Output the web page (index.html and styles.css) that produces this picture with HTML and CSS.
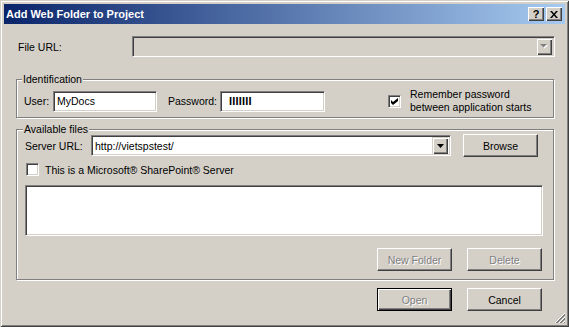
FILE: index.html
```html
<!DOCTYPE html>
<html>
<head>
<meta charset="utf-8">
<title>Add Web Folder to Project</title>
<link rel="stylesheet" href="styles.css">
</head>
<body>
<div class="window">
  <div class="titlebar">
    <span class="title">Add Web Folder to Project</span>
    <div class="tbtns">
      <span class="tbtn help">?</span>
      <span class="tbtn close"><svg width="8" height="7" viewBox="0 0 8 7"><path d="M0 0h2l2 2.4L6 0h2L5 3.5 8 7H6L4 4.6 2 7H0l3-3.5z" fill="#000"/></svg></span>
    </div>
  </div>
  <div class="content">
    <div class="file-row">
      <span class="lbl file-lbl">File URL:</span>
      <div class="combo sunken disabled">
        <span class="combo-text"></span>
        <span class="dd"><svg width="8" height="5" viewBox="0 0 8 5"><path d="M1 1h7L4.5 4.5z" fill="#fff"/><path d="M0 0h7L3.5 3.5z" fill="#808080"/></svg></span>
      </div>
    </div>

    <fieldset class="group ident">
      <legend>Identification</legend>
      <div class="ident-row">
        <span class="lbl user-lbl">User:</span>
        <div class="field sunken user">MyDocs</div>
        <span class="lbl pw-lbl">Password:</span>
        <div class="field sunken pw"><span class="mask">IIIIIII</span></div>
        <div class="remember">
          <span class="check sunken"><svg width="7" height="7" viewBox="0 0 7 7"><path d="M0 2l2 2 5-4v3L2 7 0 5z" fill="#000"/></svg></span>
          <span class="check-lbl">Remember password<br>between application starts</span>
        </div>
      </div>
    </fieldset>

    <fieldset class="group files">
      <legend>Available files</legend>
      <div class="server-row">
        <span class="lbl server-lbl">Server URL:</span>
        <div class="combo sunken server">
          <span class="combo-text">http://vietspstest/</span>
          <span class="dd"><svg width="7" height="4" viewBox="0 0 7 4"><path d="M0 0h7L3.5 4z" fill="#000"/></svg></span>
        </div>
        <span class="btn browse">Browse</span>
      </div>
      <div class="sp-row">
        <span class="check sunken"></span>
        <span class="sp-lbl">This is a Microsoft® SharePoint® Server</span>
      </div>
      <div class="listbox sunken"></div>
      <div class="btn-row">
        <span class="btn disabled">New Folder</span>
        <span class="btn disabled">Delete</span>
      </div>
    </fieldset>

    <div class="footer">
      <span class="btn default disabled">Open</span>
      <span class="btn">Cancel</span>
    </div>
  </div>
  <svg class="grip" width="12" height="12" viewBox="0 0 12 12">
    <path d="M11 1L1 11M11 5L5 11M11 9L9 11" stroke="#fff" stroke-width="1" fill="none"/>
    <path d="M11 2L2 11M11 3L3 11M11 6L6 11M11 7L7 11M11 10L10 11" stroke="#808080" stroke-width="1" fill="none"/>
  </svg>
</div>
</body>
</html>
```

FILE: styles.css
```css
* {
  box-sizing: border-box;
  margin: 0;
  padding: 0;
}

body {
  margin: 0;
  background: #d4d0c8;
  font-family: "Liberation Sans", Arial, sans-serif;
  font-size: 10.5px;
  color: #000;
}

.window {
  position: relative;
  width: 569px;
  height: 327px;
  background: #d4d0c8;
  padding: 4px;
  display: flex;
  flex-direction: column;
  box-shadow: inset 1px 1px 0 #d4d0c8, inset -1px -1px 0 #404040, inset 2px 2px 0 #fff, inset -2px -2px 0 #808080;
}

.titlebar {
  height: 20px;
  flex: none;
  display: flex;
  align-items: center;
  padding: 0 3px 0 2px;
  background: linear-gradient(to right, #0a246a, #a6caf0);
  color: #fff;
  font-weight: bold;
  font-size: 11px;
}

.title {
  flex: 1;
}

.tbtns {
  display: flex;
  gap: 2px;
}

.tbtn {
  width: 16px;
  height: 14px;
  display: flex;
  align-items: center;
  justify-content: center;
  background: #d4d0c8;
  color: #000;
  font-size: 11px;
  font-weight: bold;
  box-shadow: inset 1px 1px 0 #fff, inset -1px -1px 0 #404040, inset -2px -2px 0 #808080;
}

.content {
  flex: 1;
  display: flex;
  flex-direction: column;
  padding: 12px 11px 0 12px;
}

.sunken {
  border: 1px solid;
  border-color: #808080 #fff #fff #808080;
  box-shadow: inset 1px 1px 0 #404040, inset -1px -1px 0 #d4d0c8;
  background: #fff;
}

.lbl {
  white-space: nowrap;
}

/* File URL row */
.file-row {
  display: flex;
  align-items: center;
  height: 21px;
  margin-right: -1px;
}

.file-lbl {
  width: 116px;
  padding-left: 2px;
}

.combo {
  display: flex;
  align-items: center;
  height: 21px;
  padding: 2px;
}

.file-row .combo {
  flex: 1;
}

.combo.disabled {
  background: #d4d0c8;
}

.combo-text {
  flex: 1;
  padding-left: 2px;
}

.dd {
  width: 16px;
  height: 17px;
  display: flex;
  align-items: center;
  justify-content: center;
  background: #d4d0c8;
  box-shadow: inset 1px 1px 0 #d4d0c8, inset 2px 2px 0 #fff, inset -1px -1px 0 #404040, inset -2px -2px 0 #808080;
}

/* Group boxes */
.group {
  border: 1px solid #808080;
  box-shadow: inset 1px 1px 0 #fff, 1px 1px 0 #fff;
}

.group legend {
  line-height: 13px;
  padding: 0 1px;
  margin-left: -2px;
  background: #d4d0c8;
}

.ident {
  margin-top: 16px;
  padding: 2px 8px 3px 7px;
}

.ident-row {
  display: flex;
  align-items: center;
}

.user-lbl {
  width: 29px;
}

.field {
  height: 21px;
  display: flex;
  align-items: center;
  padding-left: 3px;
}

.user {
  width: 104px;
}

.pw-lbl {
  width: 52px;
  margin-left: 11px;
}

.pw {
  width: 105px;
  padding-left: 8px;
}

.mask {
  font-weight: bold;
  font-size: 11px;
  letter-spacing: 0.2px;
}

.remember {
  display: flex;
  align-items: center;
  margin-left: 63px;
}

.check {
  width: 13px;
  height: 13px;
  flex: none;
  display: flex;
  align-items: center;
  justify-content: center;
}

.check-lbl {
  margin-left: 9px;
  line-height: 13px;
}

/* Available files */
.files {
  margin-top: 5px;
  padding: 0 10px 8px 8px;
}

.server-row {
  display: flex;
  align-items: center;
  margin-top: -2px;
  height: 23px;
}

.server-lbl {
  width: 66px;
}

.server {
  width: 360px;
}

.server .combo-text {
  padding-left: 1px;
}

.btn {
  width: 75px;
  height: 23px;
  flex: none;
  display: flex;
  align-items: center;
  justify-content: center;
  background: #d4d0c8;
  border: 1px solid;
  border-color: #fff #404040 #404040 #fff;
  box-shadow: inset -1px -1px 0 #808080, inset 1px 1px 0 #d4d0c8;
}

.btn.default {
  border: 1px solid #000;
  box-shadow: inset 1px 1px 0 #fff, inset -1px -1px 0 #404040, inset -2px -2px 0 #808080;
}

.btn.disabled {
  color: #808080;
  text-shadow: 1px 1px 0 #fff;
}

.browse {
  margin-left: 12px;
}

.sp-row {
  display: flex;
  align-items: center;
  margin-top: 6px;
  padding-left: 1px;
}

.sp-lbl {
  margin-left: 6px;
}

.listbox {
  height: 51px;
  margin-top: 9px;
}

.btn-row {
  display: flex;
  justify-content: flex-end;
  gap: 15px;
  margin-top: 12px;
  padding-right: 1px;
}

.footer {
  display: flex;
  justify-content: flex-end;
  gap: 15px;
  margin-top: 8px;
  padding-right: 12px;
}

.grip {
  position: absolute;
  right: 3px;
  bottom: 3px;
}
```
